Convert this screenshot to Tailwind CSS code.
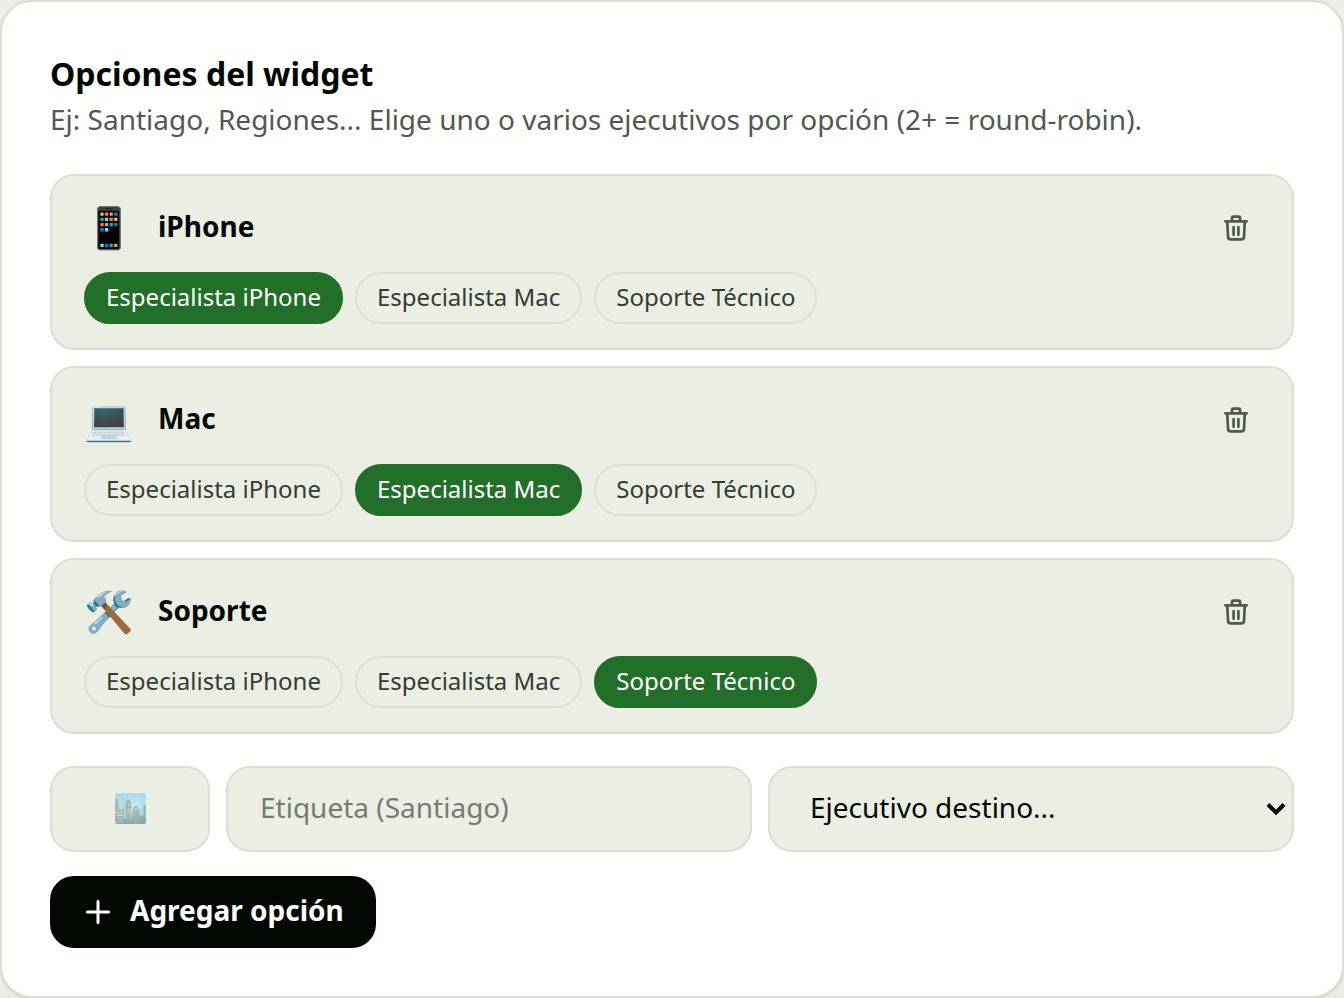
<!DOCTYPE html>
<html lang="es">
<head>
<meta charset="utf-8">
<meta name="viewport" content="width=device-width, initial-scale=1">
<title>Opciones del widget</title>
<script src="https://cdn.jsdelivr.net/npm/@tailwindcss/browser@4"></script>
</head>
<body class="bg-[#ebeee3] font-['Noto_Sans',sans-serif] text-[#020801]">
<svg class="hidden" aria-hidden="true">
  <symbol id="trash" viewBox="0 0 32 32" fill="none" stroke="currentColor" stroke-width="2.7" stroke-linecap="round" stroke-linejoin="round">
    <path d="M5.300 9.300h21.400M12 9V6.200q0-1.500 1.500-1.500h5q1.500 0 1.500 1.500V9M7.200 9.300l.8 15.500q.2 2.500 2.700 2.500h10.600q2.500 0 2.700-2.500l.8-15.500M13.600 15.200v7.600M18.400 15.200v7.600"/>
  </symbol>
</svg>
<main class="rounded-[32px] border-2 border-[#dcdfd6] bg-white p-12 shadow-sm">
  <h2 class="mt-2 text-[32px] leading-[32px] font-bold">Opciones del widget</h2>
  <p class="mt-2 text-[28px] leading-[42px] text-[#51584e]">Ej: Santiago, Regiones... Elige uno o varios ejecutivos por opción (2+ = round-robin).</p>

  <ul class="mt-[34px] flex flex-col gap-4">
    <li class="rounded-3xl border-2 border-[#dcdfd6] bg-[#ebeee3] px-8 py-6">
      <div class="flex h-14 items-center gap-6">
        <span class="pb-0.5 text-[40px] leading-[56px]">📱</span>
        <h3 class="flex-1 pb-1 text-[28px] leading-[42px] font-bold">iPhone</h3>
        <button type="button" aria-label="Eliminar iPhone" class="p-2 text-[#51584e]"><svg class="size-8"><use href="#trash"/></svg></button>
      </div>
      <div class="mt-4 flex flex-wrap gap-3 text-2xl text-[#343c32]">
        <button type="button" aria-pressed="true" class="rounded-full border-2 border-[#226f2a] bg-[#226f2a] px-5 pt-[7px] pb-[9px] text-white">Especialista iPhone</button>
        <button type="button" aria-pressed="false" class="rounded-full border-2 border-[#dcdfd6] px-5 pt-[7px] pb-[9px]">Especialista Mac</button>
        <button type="button" aria-pressed="false" class="rounded-full border-2 border-[#dcdfd6] px-5 pt-[7px] pb-[9px]">Soporte Técnico</button>
      </div>
    </li>
    <li class="rounded-3xl border-2 border-[#dcdfd6] bg-[#ebeee3] px-8 py-6">
      <div class="flex h-14 items-center gap-6">
        <span class="pb-0.5 text-[40px] leading-[56px]">💻</span>
        <h3 class="flex-1 pb-1 text-[28px] leading-[42px] font-bold">Mac</h3>
        <button type="button" aria-label="Eliminar Mac" class="p-2 text-[#51584e]"><svg class="size-8"><use href="#trash"/></svg></button>
      </div>
      <div class="mt-4 flex flex-wrap gap-3 text-2xl text-[#343c32]">
        <button type="button" aria-pressed="false" class="rounded-full border-2 border-[#dcdfd6] px-5 pt-[7px] pb-[9px]">Especialista iPhone</button>
        <button type="button" aria-pressed="true" class="rounded-full border-2 border-[#226f2a] bg-[#226f2a] px-5 pt-[7px] pb-[9px] text-white">Especialista Mac</button>
        <button type="button" aria-pressed="false" class="rounded-full border-2 border-[#dcdfd6] px-5 pt-[7px] pb-[9px]">Soporte Técnico</button>
      </div>
    </li>
    <li class="rounded-3xl border-2 border-[#dcdfd6] bg-[#ebeee3] px-8 py-6">
      <div class="flex h-14 items-center gap-6">
        <span class="pb-0.5 text-[40px] leading-[56px]">🛠️</span>
        <h3 class="flex-1 pb-1 text-[28px] leading-[42px] font-bold">Soporte</h3>
        <button type="button" aria-label="Eliminar Soporte" class="p-2 text-[#51584e]"><svg class="size-8"><use href="#trash"/></svg></button>
      </div>
      <div class="mt-4 flex flex-wrap gap-3 text-2xl text-[#343c32]">
        <button type="button" aria-pressed="false" class="rounded-full border-2 border-[#dcdfd6] px-5 pt-[7px] pb-[9px]">Especialista iPhone</button>
        <button type="button" aria-pressed="false" class="rounded-full border-2 border-[#dcdfd6] px-5 pt-[7px] pb-[9px]">Especialista Mac</button>
        <button type="button" aria-pressed="true" class="rounded-full border-2 border-[#226f2a] bg-[#226f2a] px-5 pt-[7px] pb-[9px] text-white">Soporte Técnico</button>
      </div>
    </li>
  </ul>

  <form>
    <div class="mt-8 grid grid-cols-[160px_1fr_1fr] gap-4 text-[28px] leading-[42px]">
      <input type="text" aria-label="Emoji" placeholder="🏙️" class="h-[86px] w-full rounded-3xl border-2 border-[#dcdfd6] bg-[#ebeee3] px-8 pb-1 text-center placeholder:text-[#020801]/50">
      <input type="text" aria-label="Etiqueta" placeholder="Etiqueta (Santiago)" class="h-[86px] w-full min-w-0 rounded-3xl border-2 border-[#dcdfd6] bg-[#ebeee3] px-8 pb-1 placeholder:text-[#767b72]">
      <div class="relative">
        <select aria-label="Ejecutivo destino" class="h-[86px] w-full appearance-none rounded-3xl border-2 border-[#dcdfd6] bg-[#ebeee3] pr-12 pb-1 pl-10">
          <option>Ejecutivo destino...</option>
          <option>Especialista iPhone</option>
          <option>Especialista Mac</option>
          <option>Soporte Técnico</option>
        </select>
        <svg class="pointer-events-none absolute top-1/2 right-2 h-3 w-5 -translate-y-1/2" viewBox="0 0 20 12" fill="none" stroke="currentColor" stroke-width="4"><path d="M2 1.500l8 8 8-8"/></svg>
      </div>
    </div>
    <button type="button" class="mt-6 flex h-[72px] items-center gap-4 rounded-3xl bg-[#020801] px-8 text-[28px] leading-[40px] font-bold text-white">
      <svg class="size-8" viewBox="0 0 32 32" fill="none" stroke="currentColor" stroke-width="3" stroke-linecap="round"><path d="M5.500 16h21M16 5.500v21"/></svg>
      <span class="pb-1">Agregar opción</span>
    </button>
  </form>
</main>
</body>
</html>
